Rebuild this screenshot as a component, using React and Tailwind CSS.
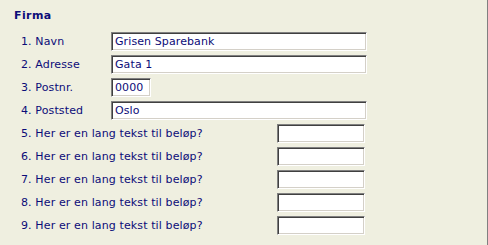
import React from "react";

const font = { fontFamily: '"DejaVu Sans", Verdana, sans-serif' };

const rows = [
  { label: "1. Navn", value: "Grisen Sparebank", w: "w-[256px]", col: "ml-[90px]" },
  { label: "2. Adresse", value: "Gata 1", w: "w-[256px]", col: "ml-[90px]" },
  { label: "3. Postnr.", value: "0000", w: "w-[40px]", col: "ml-[90px]" },
  { label: "4. Poststed", value: "Oslo", w: "w-[256px]", col: "ml-[90px]" },
  { label: "5. Her er en lang tekst til beløp?", value: "", w: "w-[88px]", col: "ml-[256px]" },
  { label: "6. Her er en lang tekst til beløp?", value: "", w: "w-[88px]", col: "ml-[256px]" },
  { label: "7. Her er en lang tekst til beløp?", value: "", w: "w-[88px]", col: "ml-[256px]" },
  { label: "8. Her er en lang tekst til beløp?", value: "", w: "w-[88px]", col: "ml-[256px]" },
  { label: "9. Her er en lang tekst til beløp?", value: "", w: "w-[88px]", col: "ml-[256px]" },
];

function Field({ value, w }) {
  return (
    <input
      readOnly
      value={value}
      style={font}
      className={`${w} h-[19px] border border-t-[#808080] border-l-[#808080] border-b-white border-r-white bg-white px-[3px] text-[11px] tracking-[0.1px] text-[#0c0c78] shadow-[inset_1px_1px_0_#404040,inset_-1px_-1px_0_#d4d0c8] outline-none`}
    />
  );
}

export default function App() {
  return (
    <div
      style={font}
      className="h-[245px] w-[488px] overflow-hidden border-r border-[#808080] bg-[#efefe0] text-[11px] leading-[13px] tracking-[0.12px] text-[#0c0c78]"
    >
      <div className="pl-[14px] pt-[9px] font-bold tracking-[0.4px]">Firma</div>

      <div className="mt-[10px] flex flex-col gap-[4px] pl-[21px]">
        {rows.map((r) => (
          <div key={r.label} className="flex h-[19px] items-center">
            <span className="w-0 whitespace-nowrap">{r.label}</span>
            <div className={r.col}>
              <Field value={r.value} w={r.w} />
            </div>
          </div>
        ))}
      </div>
    </div>
  );
}
